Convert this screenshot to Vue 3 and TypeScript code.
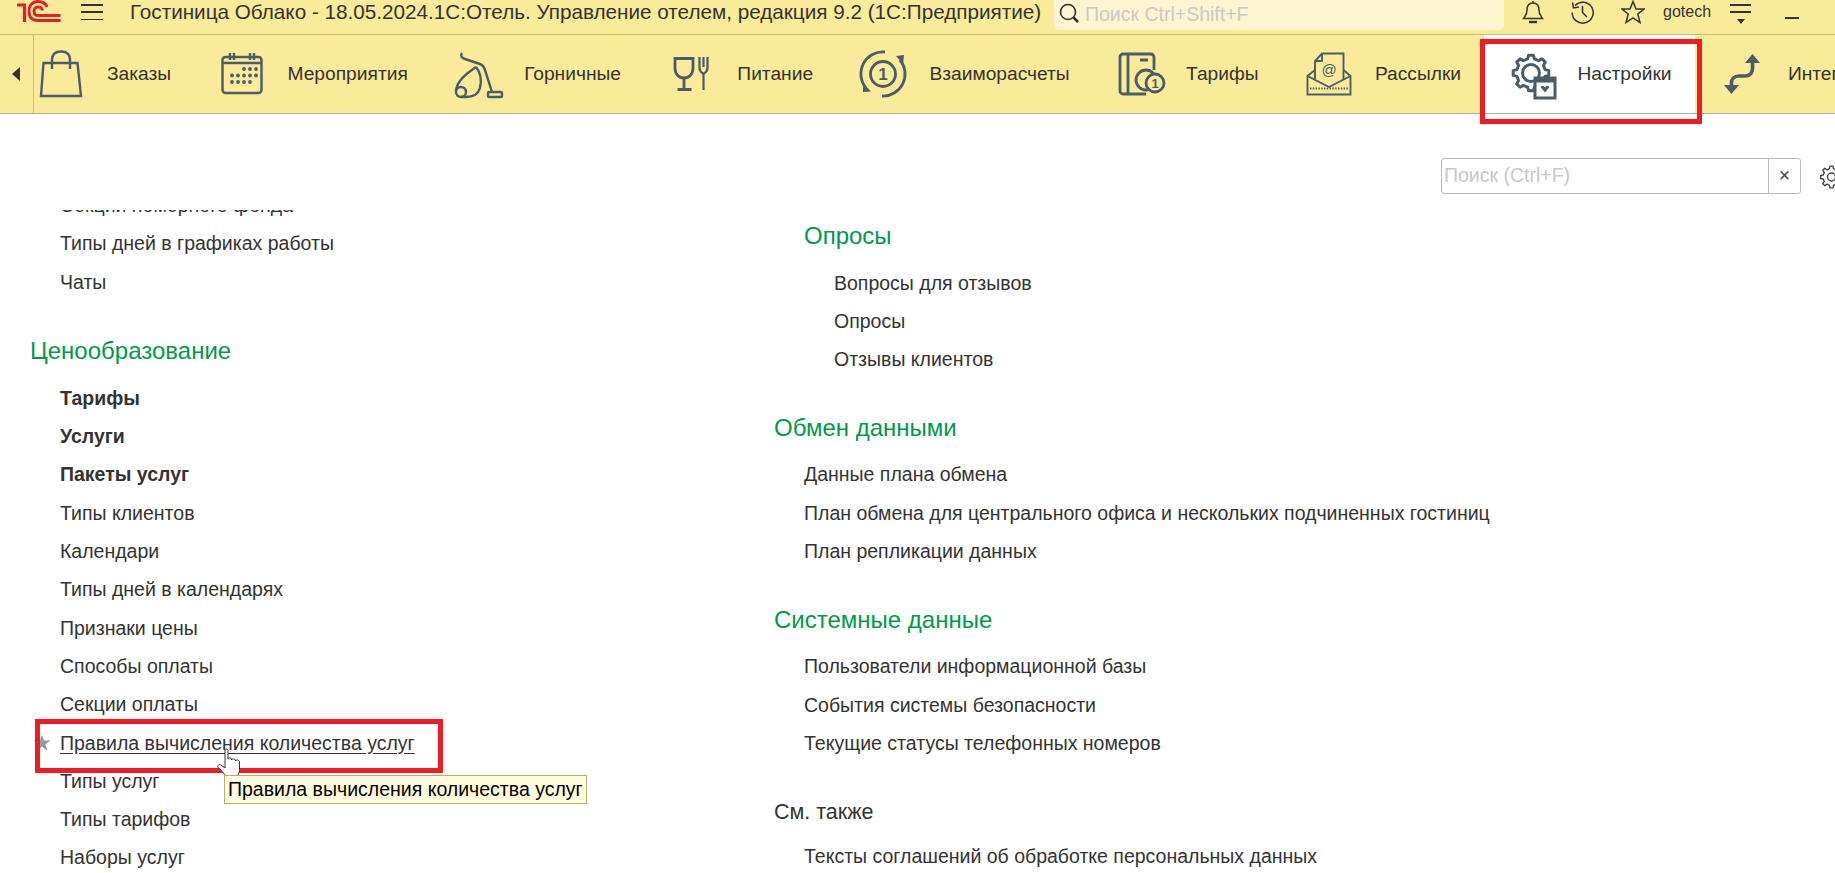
<template>
	<div class="app">
		<header class="topbar">
			<svg class="logo" width="44" height="22" viewBox="0 0 44 22" fill="none" stroke="#e01f26" stroke-width="2.8">
				<path d="M0 5H7.5V22" stroke-width="3.2" />
				<path d="M30 7C28.5 3 25 1.5 21 1.5C15 1.5 12 6 12 11C12 17 15 20.5 21 20.5H43.5" />
				<path d="M25.5 10.5C25 8 23 7 21 7C18.5 7 17 9 17 11C17 14 18.5 15.5 21 15.5H43.5" />
			</svg>
			<div class="burger"><span></span><span></span><span></span></div>
			<div class="title">Гостиница Облако - 18.05.2024.1С:Отель. Управление отелем, редакция 9.2  (1С:Предприятие)</div>
			<div class="global-search">
				<svg width="24" height="20" viewBox="0 0 24 20" fill="none" stroke="#333" stroke-width="1.6">
					<circle cx="10" cy="9" r="7.5" />
					<path d="M15.5 14.5L20 19" stroke-width="2.6" />
				</svg>
				<span>Поиск Ctrl+Shift+F</span>
			</div>
			<div class="tools">
				<svg class="bell" width="22" height="24" viewBox="0 0 22 24" fill="none" stroke="#333" stroke-width="1.5">
					<path d="M11 1V3M11 3C7 3 5 6 5 10C5 15 3 16 1.5 18.5H20.5C19 16 17 15 17 10C17 6 15 3 11 3Z" />
					<path d="M7 22H15" stroke-width="2.4" />
				</svg>
				<svg class="history" width="23" height="24" viewBox="0 0 23 24" fill="none" stroke="#333" stroke-width="1.5">
					<path d="M4 5.5A10.5 10.5 0 1 1 1.2 12.5" />
					<path d="M1.5 2.5L2.5 8L8 7" />
					<path d="M11.5 6V12.5L16 17" />
				</svg>
				<svg class="star" width="24" height="24" viewBox="0 0 24 24" fill="none" stroke="#333" stroke-width="1.5">
					<path d="M12 1.5L15 9H23L16.8 14L19 22.5L12 17.8L5 22.5L7.2 14L1 9H9Z" />
				</svg>
				<span class="user">gotech</span>
				<div class="menu-lines"><span></span><span></span><i></i></div>
				<div class="minimize"></div>
			</div>
		</header>

		<nav class="nav">
			<div class="nav-back"><i></i></div>
			<div
				v-for="item in navItems"
				:key="item.label"
				class="nav-item"
				:class="{ active: item.active }"
			>
				<svg
					class="nav-icon"
					width="48"
					height="48"
					viewBox="0 0 48 48"
					fill="none"
					stroke="#4a5c69"
					stroke-width="2.4"
				>
					<template v-if="item.icon === 'bag'">
						<path d="M6.5 13H40.5L44 46H4Z" />
						<path d="M15 19V10C15 4 19 1.5 24 1.5S33 4 33 10V19" />
					</template>
					<template v-else-if="item.icon === 'calendar'">
						<rect x="4.5" y="7" width="39" height="36" rx="3" />
						<path d="M4.5 13H43.5M12 3V10M16 3V10M32 3V10M36 3V10" />
						<circle v-for="d in calendarDots" :key="d.x + '-' + d.y" :cx="d.x" :cy="d.y" r="1.9" fill="#4a5c69" stroke="none" />
					</template>
					<template v-else-if="item.icon === 'vacuum'">
						<path d="M8 3C6 6 8 8 11 9L26 14C29 15 30 17 31 20L38 42" />
						<path d="M22 17C26 22 28 30 26 38C24 45 18 47 12 47H7" />
						<path d="M22 17C12 24 4 30 2 40" />
						<circle cx="7" cy="42" r="5" />
						<rect x="34" y="42" width="14" height="5" rx="1" />
					</template>
					<template v-else-if="item.icon === 'food'">
						<path d="M8 8.5H26V18C26 24 22 28 17 28S8 24 8 18Z" stroke-width="2.8" />
						<path d="M17 28V39M10.5 39.5H24.5" stroke-width="2.8" />
						<path d="M32.5 7V18C32.5 21 35 23 36.5 24V40M40.5 7V18C40.5 21 38 23 36.5 24M36.5 7V17" stroke-width="2.2" />
					</template>
					<template v-else-if="item.icon === 'exchange'">
						<path d="M26 2A22 22 0 0 0 7 38" stroke-width="2.8" />
						<path d="M23 46A22 22 0 0 0 41 10" stroke-width="2.8" />
						<path d="M37 6L45 5L44 14Z M4 33L12 41.5L4 42Z" fill="#4a5c69" stroke="none" />
						<circle cx="24" cy="24" r="12.5" stroke-width="2.8" />
						<text x="24" y="30" text-anchor="middle" class="icon-digit" font-size="17">1</text>
					</template>
					<template v-else-if="item.icon === 'tariff'">
						<path d="M38 20V7A3 3 0 0 0 35 4H7A3 3 0 0 0 4 7V41A3 3 0 0 0 7 44H30" stroke-width="2.8" />
						<path d="M12 4V44M24 10H32" stroke-width="2.8" />
						<circle cx="30" cy="30" r="10" stroke-width="2.8" />
						<circle cx="39" cy="33" r="9" fill="#faeb9a" stroke-width="2.8" />
						<text x="39" y="38" text-anchor="middle" class="icon-digit" font-size="13">1</text>
					</template>
					<template v-else-if="item.icon === 'mail'">
						<path d="M10 20L2.5 26V44.5H45.5V26L38.5 20" stroke-width="1.9" />
						<path d="M2.5 26L24 37L45.5 26" stroke-width="1.9" />
						<path d="M10 29V11L17 3.5H38.5V29M17 3.5V11H10" stroke-width="1.9" />
						<path d="M5 38.5H43" stroke-width="2" stroke-dasharray="1.4 1.4" />
						<text x="24" y="25" text-anchor="middle" class="icon-at" font-size="15">@</text>
					</template>
					<template v-else-if="item.icon === 'settings'">
						<path :d="bigGear" stroke-width="3" stroke-linejoin="round" />
						<circle cx="24" cy="23" r="8.5" stroke-width="3" />
						<rect x="28" y="28" width="20" height="20" fill="#fff" stroke-width="3" />
						<path d="M28 30H48" stroke-width="5" />
						<path d="M33.5 37C35 35.5 37 36 38 37.5C39 36 41 35.5 42.5 37L38 42.5Z" fill="#4a5c69" stroke="none" />
					</template>
					<template v-else>
						<path d="M34.5 12V18C34.5 23 32 26 27 26H21C16 26 13.5 29 13.5 33V36" stroke-width="3.6" />
						<path d="M34.5 4L42 13H27Z M13.5 44L21 35H6Z" fill="#4a5c69" stroke="none" />
					</template>
				</svg>
				<span class="nav-label">{{ item.label }}</span>
			</div>
		</nav>

		<div class="search-row">
			<div class="section-search">
				<span class="section-search-text">Поиск (Ctrl+F)</span>
				<span class="section-search-clear">×</span>
			</div>
			<svg class="section-gear" width="23" height="24" viewBox="0 0 23 24" fill="none" stroke="#444" stroke-width="1.4">
				<path :d="smallGear" stroke-linejoin="round" />
				<circle cx="11.5" cy="12" r="4" />
			</svg>
		</div>

		<main class="panes">
			<section class="pane pane-left">
				<template v-for="group in leftGroups" :key="group.title">
					<h2 v-if="group.title" class="group-title">{{ group.title }}</h2>
					<div v-for="row in group.rows" :key="row.text" class="row" :class="{ strong: row.bold }">
						<svg v-if="row.star" class="row-star" width="18" height="16" viewBox="0 0 18 16">
							<path d="M9 0L11.2 5.5H17.5L12.5 9.3L14.4 15.5L9 11.8L3.6 15.5L5.5 9.3L.5 5.5H6.8Z" fill="#999" />
						</svg>
						<span :class="{ hovered: row.star }">{{ row.text }}</span>
					</div>
				</template>
			</section>
			<section class="pane pane-right">
				<div v-for="group in rightGroups" :key="group.title" class="group" :class="{ nested: group.nested }">
					<h2 class="group-title" :class="{ plain: group.plain }">{{ group.title }}</h2>
					<div v-for="row in group.rows" :key="row.text" class="row">
						<span>{{ row.text }}</span>
					</div>
				</div>
			</section>
		</main>

		<!-- annotations from the original screenshot -->
		<div class="mark mark-tab"></div>
		<div class="mark mark-row"></div>
		<svg class="cursor" width="26" height="31" viewBox="0 0 26 31">
			<path
				d="M8 2.2C8 .8 11 .8 11 2.2V11C11.5 9.5 14 9.5 14.5 11V12C15 10.5 18 10.5 18.5 12V13C19 11.5 22 11.5 22.5 13.5V21C22.5 26 20 30 15 30C10 30 7 26 4 22L1 19.5C0 18 2 15.5 4 17L8 20Z"
				fill="#fff"
				stroke="#333"
				stroke-width="1"
			/>
		</svg>
		<div class="tooltip">Правила вычисления количества услуг</div>
	</div>
</template>

<script setup lang="ts">
interface NavItem {
	label: string
	icon: string
	active?: boolean
}

interface Row {
	text: string
	bold?: boolean
	star?: boolean
}

interface Group {
	title: string
	rows: Row[]
	nested?: boolean
	plain?: boolean
}

const navItems: NavItem[] = [
	{ label: 'Заказы', icon: 'bag' },
	{ label: 'Мероприятия', icon: 'calendar' },
	{ label: 'Горничные', icon: 'vacuum' },
	{ label: 'Питание', icon: 'food' },
	{ label: 'Взаиморасчеты', icon: 'exchange' },
	{ label: 'Тарифы', icon: 'tariff' },
	{ label: 'Рассылки', icon: 'mail' },
	{ label: 'Настройки', icon: 'settings', active: true },
	{ label: 'Интеграция', icon: 'swap' },
]

const leftGroups: Group[] = [
	{
		title: '',
		rows: [
			{ text: 'Секции номерного фонда' },
			{ text: 'Типы дней в графиках работы' },
			{ text: 'Чаты' },
		],
	},
	{
		title: 'Ценообразование',
		rows: [
			{ text: 'Тарифы', bold: true },
			{ text: 'Услуги', bold: true },
			{ text: 'Пакеты услуг', bold: true },
			{ text: 'Типы клиентов' },
			{ text: 'Календари' },
			{ text: 'Типы дней в календарях' },
			{ text: 'Признаки цены' },
			{ text: 'Способы оплаты' },
			{ text: 'Секции оплаты' },
			{ text: 'Правила вычисления количества услуг', star: true },
			{ text: 'Типы услуг' },
			{ text: 'Типы тарифов' },
			{ text: 'Наборы услуг' },
		],
	},
]

const rightGroups: Group[] = [
	{
		title: 'Опросы',
		nested: true,
		rows: [
			{ text: 'Вопросы для отзывов' },
			{ text: 'Опросы' },
			{ text: 'Отзывы клиентов' },
		],
	},
	{
		title: 'Обмен данными',
		rows: [
			{ text: 'Данные плана обмена' },
			{ text: 'План обмена для центрального офиса и нескольких подчиненных гостиниц' },
			{ text: 'План репликации данных' },
		],
	},
	{
		title: 'Системные данные',
		rows: [
			{ text: 'Пользователи информационной базы' },
			{ text: 'События системы безопасности' },
			{ text: 'Текущие статусы телефонных номеров' },
		],
	},
	{
		title: 'См. также',
		plain: true,
		rows: [{ text: 'Тексты соглашений об обработке персональных данных' }],
	},
]

const calendarDots: { x: number; y: number }[] = []
for (const [y, from, count] of [[19, 26, 3], [25.5, 14, 5], [32, 14, 4]]) {
	for (let i = 0; i < count; i++) calendarDots.push({ x: from + i * 6, y })
}

const gearPath = (cx: number, cy: number, outer: number, inner: number, teeth: number): string => {
	const step = (Math.PI * 2) / teeth
	const points: string[] = []
	for (let i = 0; i < teeth; i++) {
		const a = i * step
		const spots: [number, number][] = [
			[a - step * 0.3, inner],
			[a - step * 0.17, outer],
			[a + step * 0.17, outer],
			[a + step * 0.3, inner],
		]
		for (const [angle, r] of spots) {
			points.push(`${(cx + Math.cos(angle) * r).toFixed(1)} ${(cy + Math.sin(angle) * r).toFixed(1)}`)
		}
	}
	return 'M' + points.join('L') + 'Z'
}

const bigGear = gearPath(24, 23, 18, 14.5, 8)
const smallGear = gearPath(11.5, 12, 11, 8.5, 8)
</script>

<style scoped>
.app {
	position: relative;
	width: 1835px;
	height: 873px;
	overflow: hidden;
	background-color: #fff;
	color: #333;
	font-family: "Liberation Sans", Arial, sans-serif;
	font-size: 19.5px;
	display: flex;
	flex-direction: column;
}

.topbar {
	flex: 0 0 35px;
	box-sizing: border-box;
	display: flex;
	align-items: flex-start;
	background-color: #faeb9a;
	border-bottom: 1px solid #cdbb6e;
}

.logo {
	flex: none;
	margin-left: 17px;
}

.burger {
	flex: none;
	margin: 4px 0 0 20px;
	width: 22px;
	height: 16px;
	display: flex;
	flex-direction: column;
	justify-content: space-between;
}

.burger span {
	height: 1.5px;
	background-color: #333;
}

.title {
	flex: 0 0 924px;
	margin: 1px 0 0 27px;
	font-size: 20.7px;
	line-height: 22px;
	white-space: pre;
	overflow: hidden;
}

.global-search {
	flex: none;
	box-sizing: border-box;
	width: 450px;
	height: 30px;
	padding: 3px 0 0 4px;
	display: flex;
	gap: 3px;
	background-color: #fdf5d0;
	border-radius: 0 0 5px 5px;
	color: #c9c9c9;
	line-height: 22px;
}

.tools {
	flex: 1;
	display: flex;
	align-items: flex-start;
	padding-left: 18px;
}

.history {
	margin-left: 27px;
}

.star {
	margin-left: 27px;
}

.user {
	margin: 1px 0 0 18px;
	font-size: 16px;
	line-height: 21px;
}

.menu-lines {
	position: relative;
	margin: 4px 0 0 19px;
	width: 21px;
	height: 19px;
}

.menu-lines span {
	display: block;
	height: 1.5px;
	margin-bottom: 5.5px;
	background-color: #333;
}

.menu-lines i {
	display: block;
	width: 0;
	height: 0;
	margin: 6px auto 0;
	border-left: 4px solid transparent;
	border-right: 4px solid transparent;
	border-top: 5px solid #333;
}

.minimize {
	margin: 17px 0 0 34px;
	width: 14px;
	height: 2px;
	background-color: #333;
}

.nav {
	flex: 0 0 79px;
	box-sizing: border-box;
	display: flex;
	overflow: hidden;
	background-color: #faeb9a;
	border-bottom: 1px solid #a9a9a9;
}

.nav-back {
	flex: none;
	box-sizing: border-box;
	width: 34px;
	padding-left: 12px;
	display: flex;
	align-items: center;
	border-right: 1px solid #cdbb6e;
}

.nav-back i {
	width: 0;
	height: 0;
	border-top: 7px solid transparent;
	border-bottom: 7px solid transparent;
	border-right: 8px solid #333;
}

.nav-item {
	flex: none;
	padding: 0 23.2px;
	display: flex;
	align-items: center;
	gap: 22px;
}

.nav-item:nth-child(2) {
	padding-left: 3px;
}

.nav-item.active {
	background-color: #fff;
}

.nav-icon {
	flex: none;
	overflow: visible;
}

.icon-digit {
	font-family: "Liberation Sans", Arial, sans-serif;
	font-weight: 700;
	fill: #4a5c69;
	stroke: none;
}

.icon-at {
	font-family: "Liberation Sans", Arial, sans-serif;
	fill: #4a5c69;
	stroke: none;
}

.nav-label {
	font-size: 19.2px;
	line-height: 22px;
}

.search-row {
	flex: 0 0 96px;
	box-sizing: border-box;
	padding-top: 44px;
	display: flex;
	align-items: flex-start;
}

.section-search {
	box-sizing: border-box;
	width: 360px;
	height: 36px;
	margin-left: auto;
	display: flex;
	border: 1px solid #bbb;
	border-radius: 3px;
}

.section-search-text {
	flex: 1;
	padding-left: 2px;
	color: #c8c8c8;
	line-height: 33px;
}

.section-search-clear {
	flex: 0 0 31px;
	text-align: center;
	border-left: 1px solid #bbb;
	color: #444;
	line-height: 33px;
}

.section-gear {
	flex: none;
	margin: 7px -8px 0 19px;
}

.panes {
	flex: 1;
	min-height: 0;
	display: flex;
	overflow: hidden;
}

.pane-left {
	flex: 0 0 744px;
	margin-top: -24px;
	padding-left: 30px;
}

.pane-right {
	flex: 1;
	padding-top: 7px;
}

.group {
	margin-bottom: 30.5px;
}

.group.nested {
	margin-left: 30px;
}

.group-title {
	height: 38px;
	margin: 31px 0 9px;
	font-size: 24px;
	font-weight: 400;
	line-height: 38px;
	color: #00994a;
}

.group .group-title {
	margin-top: 0;
	margin-bottom: 8.5px;
}

.group .group-title.plain {
	margin-bottom: 6.5px;
	font-size: 21.5px;
	color: #333;
}

.row {
	position: relative;
	height: 38.3px;
	padding-left: 30px;
	line-height: 38px;
	white-space: nowrap;
}

.row.strong {
	font-weight: 700;
}

.row-star {
	position: absolute;
	left: 3px;
	top: 11px;
}

.hovered {
	text-decoration: underline;
	text-underline-offset: 3px;
}

.mark {
	position: absolute;
	box-sizing: border-box;
	border: 5px solid #ee1c25;
	pointer-events: none;
}

.mark-tab {
	left: 1480px;
	top: 39px;
	width: 222px;
	height: 85px;
}

.mark-row {
	left: 35px;
	top: 719px;
	width: 408px;
	height: 54px;
}

.cursor {
	position: absolute;
	left: 217px;
	top: 748px;
}

.tooltip {
	position: absolute;
	left: 224px;
	top: 775px;
	height: 29px;
	box-sizing: border-box;
	padding: 0 3px;
	background-color: #fffbdd;
	border: 1px solid #b8ae6e;
	color: #000;
	line-height: 27px;
	white-space: nowrap;
}
</style>
